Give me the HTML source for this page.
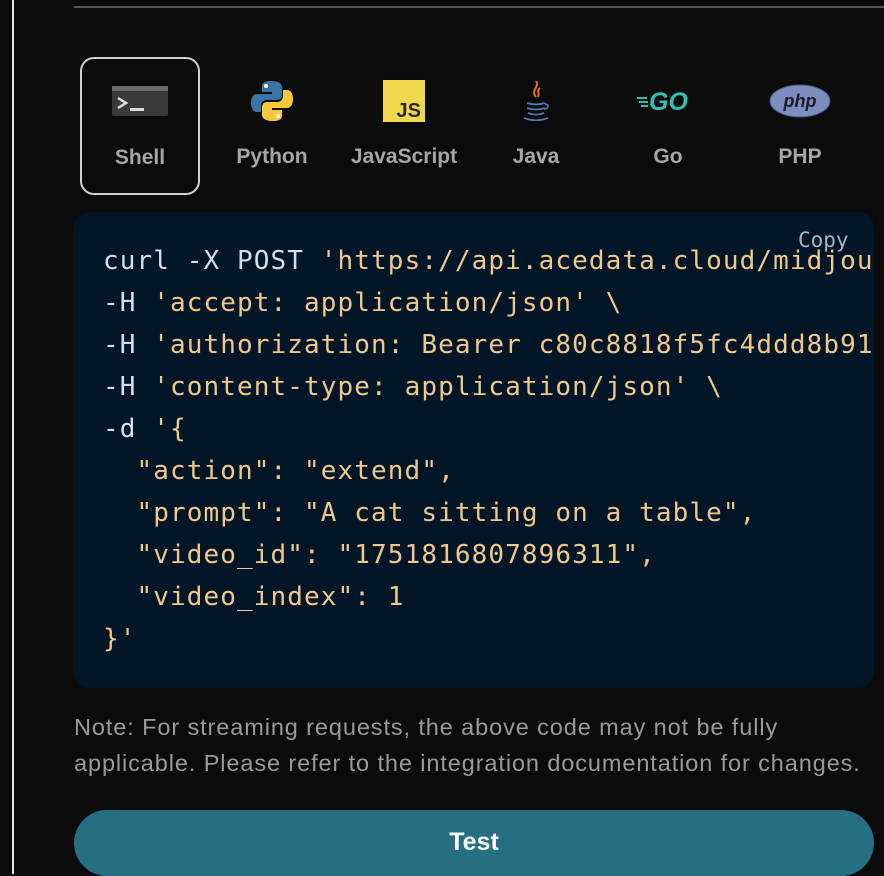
<!DOCTYPE html>
<html><head><style>
*{margin:0;padding:0;box-sizing:border-box}
body{width:884px;height:874px;background:#0b0b0b;position:relative;overflow:hidden;font-family:"Liberation Sans",sans-serif}
.vl{position:absolute;left:12px;top:0;width:2px;height:874px;background:#e8e8e8}
.hl{position:absolute;left:74px;top:6px;width:810px;height:2px;background:#555}
.tab{position:absolute;top:57px;width:120px;height:138px;text-align:center}
.tab .ic{position:absolute;left:0;right:0;top:20px;height:48px;display:flex;justify-content:center;align-items:center}
.tab .lb{position:absolute;left:-20px;right:-20px;top:88px;font-size:21px;font-weight:bold;color:#a6a6a6;text-align:center}
.sel{border:2px solid #d0d0d0;border-radius:14px}
.sel .ic{top:18px}.sel .lb{top:87px}
.code{position:absolute;left:74px;top:212px;width:800px;height:476px;background:#021627;border-radius:16px;overflow:hidden}
pre{position:absolute;left:29px;top:28px;font-family:"DejaVu Sans Mono","Liberation Mono",monospace;font-size:26px;line-height:42px;color:#f0c88d;white-space:pre;letter-spacing:1.1px}
.w{color:#d6deeb}
.copy{position:absolute;left:724px;top:16px;font-family:"DejaVu Sans Mono",monospace;font-size:21px;color:#aab4c0}
.note{position:absolute;left:74px;top:709px;width:810px;font-size:23.5px;letter-spacing:0.9px;line-height:36px;color:#9a9a9a;white-space:nowrap}
.btn{position:absolute;left:74px;top:810px;width:800px;height:66px;border-radius:33px;background:#266e82;color:#fff;font-size:25px;font-weight:bold;text-align:center;line-height:64px}
</style></head><body>
<div class="vl"></div><div class="hl"></div>

<div class="tab sel" style="left:80px"><div class="ic"><svg width="56" height="30" viewBox="0 0 56 30"><rect width="56" height="30" rx="2" fill="#3a3a3a"/><rect width="56" height="5" fill="#6a6a6a"/><path d="M6 12l8 5-8 5" stroke="#ddd" stroke-width="2.5" fill="none"/><rect x="18" y="22" width="14" height="3" fill="#ddd"/></svg></div><div class="lb">Shell</div></div>

<div class="tab" style="left:212px"><div class="ic"><svg width="44" height="44" viewBox="0 0 44 44"><path d="M21 2c-9 0-9 4-9 6v5h10v2H7c-4 0-6 4-6 9s2 9 6 9h4v-6c0-4 3-6 6-6h10c3 0 5-2 5-5V8c0-3-3-6-11-6z" fill="#3b75a8"/><circle cx="16" cy="7" r="2" fill="#fff"/><path d="M23 42c9 0 9-4 9-6v-5H22v-2h15c4 0 6-4 6-9s-2-9-6-9h-4v6c0 4-3 6-6 6H17c-3 0-5 2-5 5v8c0 3 3 6 11 6z" fill="#f6c93c"/><circle cx="28" cy="37" r="2" fill="#fff"/></svg></div><div class="lb">Python</div></div>

<div class="tab" style="left:344px"><div class="ic"><svg width="42" height="42" viewBox="0 0 42 42"><rect width="42" height="42" fill="#f0d84e"/><text x="38" y="37" text-anchor="end" font-family="Liberation Sans" font-weight="bold" font-size="20" fill="#2a2a2a">JS</text></svg></div><div class="lb">JavaScript</div></div>

<div class="tab" style="left:476px"><div class="ic"><svg width="30" height="44" viewBox="0 0 30 44"><path d="M15 2c4 6-6 9 0 16M19 9c-4 3 0 6-2 9" stroke="#e2701c" stroke-width="2" fill="none"/><path d="M6 24c6 2 12 2 18 0M6 29c6 2 12 2 18 0M7 34c5 2 11 2 16 0M3 39c8 3 16 3 24 0M24 25c4 0 4 5-1 5" stroke="#4c7bb0" stroke-width="1.8" fill="none"/></svg></div><div class="lb">Java</div></div>

<div class="tab" style="left:608px"><div class="ic"><svg width="62" height="26" viewBox="0 0 62 26"><path d="M0 10h10M2 14h9M4 18h7" stroke="#2fc0b4" stroke-width="2"/><text x="12" y="22" font-family="Liberation Sans" font-style="italic" font-weight="bold" font-size="25" fill="#2fc0b4">GO</text></svg></div><div class="lb">Go</div></div>

<div class="tab" style="left:740px"><div class="ic"><svg width="62" height="34" viewBox="0 0 62 34"><ellipse cx="31" cy="17" rx="30" ry="16" fill="#7b8ebe" stroke="#4a5a8a"/><text x="31" y="23" text-anchor="middle" font-family="Liberation Sans" font-style="italic" font-weight="bold" font-size="18" fill="#1a1a2a">php</text></svg></div><div class="lb">PHP</div></div>

<div class="code"><pre><span class="w">curl -X POST </span>'https://api.acedata.cloud/midjourney/videos' \
<span class="w">-H </span>'accept: application/json' \
<span class="w">-H </span>'authorization: Bearer c80c8818f5fc4ddd8b91' \
<span class="w">-H </span>'content-type: application/json' \
<span class="w">-d </span>'{
  "action": "extend",
  "prompt": "A cat sitting on a table",
  "video_id": "1751816807896311",
  "video_index": 1
}'</pre><div class="copy">Copy</div></div>

<div class="note">Note: For streaming requests, the above code may not be fully<br>applicable. Please refer to the integration documentation for changes.</div>
<div class="btn">Test</div>
</body></html>
